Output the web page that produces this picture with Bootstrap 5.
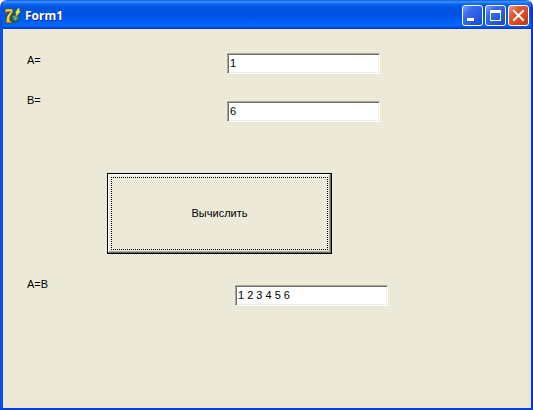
<!DOCTYPE html>
<html lang="ru">
<head>
<meta charset="utf-8">
<meta name="viewport" content="width=device-width, initial-scale=1">
<title>Form1</title>
<link href="https://cdn.jsdelivr.net/npm/bootstrap@5.3.0/dist/css/bootstrap.min.css" rel="stylesheet">
<style>
  body { background: #fff; font-family: "Liberation Sans", Arial, sans-serif; font-size: 11px; line-height: 14px; color: #000; }
  .xp-window { background: #ece9d8; border: solid; border-width: 0 2px 2px 3px; border-color: #0138dd #0138dd #0140e8 #0a50e4; border-radius: 7px 7px 0 0; overflow: hidden; }
  .xp-title { height: 29px; margin: 0 -2px 0 -3px; padding: 2px 4px 0 4px; background: linear-gradient(#0a57dc 0, #3c92ff 6%, #0c64f2 14%, #0053e1 28%, #0054e3 55%, #0060fa 76%, #0066ff 88%, #003fd0 97%, #0038c4 100%); }
  .xp-title h1 { margin-left: 3px; font: bold 12px/16px "Noto Sans", sans-serif; color: #fff; text-shadow: 1px 1px 0 #0f2a80; }
  .xp-gap { gap: 2px; }
  .xp-ctl { width: 21px; height: 21px; border: 1px solid #fff; border-radius: 3px; background: linear-gradient(135deg, #7c9ff5 0, #3a6bea 30%, #2558df 70%, #1c48c8 100%); }
  .xp-close { background: linear-gradient(135deg, #f0a085 0, #e25c35 30%, #d8431a 70%, #b93810 100%); }
  .xp-form { padding: 24px; }
  .label-stack { width: 200px; gap: 26px; }
  .field-stack { gap: 27px; }
  .xp-input { width: 153px; height: 21px; padding: 0 2px 2px; font-size: 11px; line-height: 14px; color: #000; background: #fff; border: 1px solid; border-color: #aca899 #fff #fff #aca899; border-radius: 0; box-shadow: inset 1px 1px 0 #716f64, inset -1px -1px 0 #f1efe2; }
  .calc-btn { width: 225px; height: 81px; margin: 51px 0 23px 80px; padding: 3px; font-size: 11px; line-height: 14px; color: #000; background: #ece9d8; border: 1px solid #000; border-radius: 0; box-shadow: inset -1px -1px 0 #716f64, inset 1px 1px 0 #fff, inset -2px -2px 0 #aca899, inset 2px 2px 0 #f1efe2; }
  .calc-btn > span { padding-bottom: 2px; border: 1px dotted #000; }
  .result-label { width: 208px; }
  .result-field { margin-top: 8px; }
</style>
<script src="https://cdn.jsdelivr.net/npm/bootstrap@5.3.0/dist/js/bootstrap.bundle.min.js"></script>
</head>
<body>
<div class="xp-window d-flex flex-column min-vh-100">
  <header class="xp-title d-flex align-items-center">
    <svg width="18" height="20" viewBox="0 0 18 20" aria-hidden="true">
      <circle cx="11" cy="12" r="4.5" fill="#1d4f55"/>
      <path d="M8 10l4-1 3 3-3 3-3-1z" fill="#3f8f68"/>
      <path d="M10 10l2 2-1 2" fill="none" stroke="#9cb8a4"/>
      <path d="M1 3h8v3L6 11v4h2v2H2v-3l1-4 3-4H3v1H1z" fill="#d9b92c" stroke="#59450b" stroke-width=".8"/>
      <path d="M2 4h6M6 7l-2 4v4" fill="none" stroke="#f7e670"/>
      <path d="M14 2l2 1-1 2h2l-5 6v-4h-1z" fill="#e9ec2e" stroke="#667b17" stroke-width=".5"/>
    </svg>
    <h1 class="mb-0 flex-grow-1">Form1</h1>
    <div class="d-flex xp-gap">
      <button type="button" class="xp-ctl p-0 d-flex" aria-label="Свернуть"><svg width="19" height="19" aria-hidden="true"><path d="M4 12h7v3H4z" fill="#fff"/></svg></button>
      <button type="button" class="xp-ctl p-0 d-flex" aria-label="Развернуть"><svg width="19" height="19" aria-hidden="true"><path d="M4 4h11v11H4zM5 7v7h9V7z" fill="#fff" fill-rule="evenodd"/></svg></button>
      <button type="button" class="xp-ctl xp-close p-0 d-flex" aria-label="Закрыть"><svg width="19" height="19" aria-hidden="true"><path d="M5 5l9 9M14 5l-9 9" stroke="#fff" stroke-width="2" stroke-linecap="square"/></svg></button>
    </div>
  </header>
  <main class="flex-grow-1">
    <form class="xp-form">
      <div class="d-flex">
        <div class="label-stack d-flex flex-column flex-shrink-0">
          <label for="a">A=</label>
          <label for="b">B=</label>
        </div>
        <div class="field-stack d-flex flex-column">
          <input id="a" class="form-control xp-input" type="text" value="1">
          <input id="b" class="form-control xp-input" type="text" value="6">
        </div>
      </div>
      <button type="button" class="btn calc-btn d-flex"><span class="flex-grow-1 align-self-stretch d-flex align-items-center justify-content-center">Вычислить</span></button>
      <div class="d-flex align-items-start">
        <label class="result-label flex-shrink-0" for="r">A=B</label>
        <input id="r" class="form-control xp-input result-field" type="text" value="1 2 3 4 5 6">
      </div>
    </form>
  </main>
</div>
</body>
</html>
